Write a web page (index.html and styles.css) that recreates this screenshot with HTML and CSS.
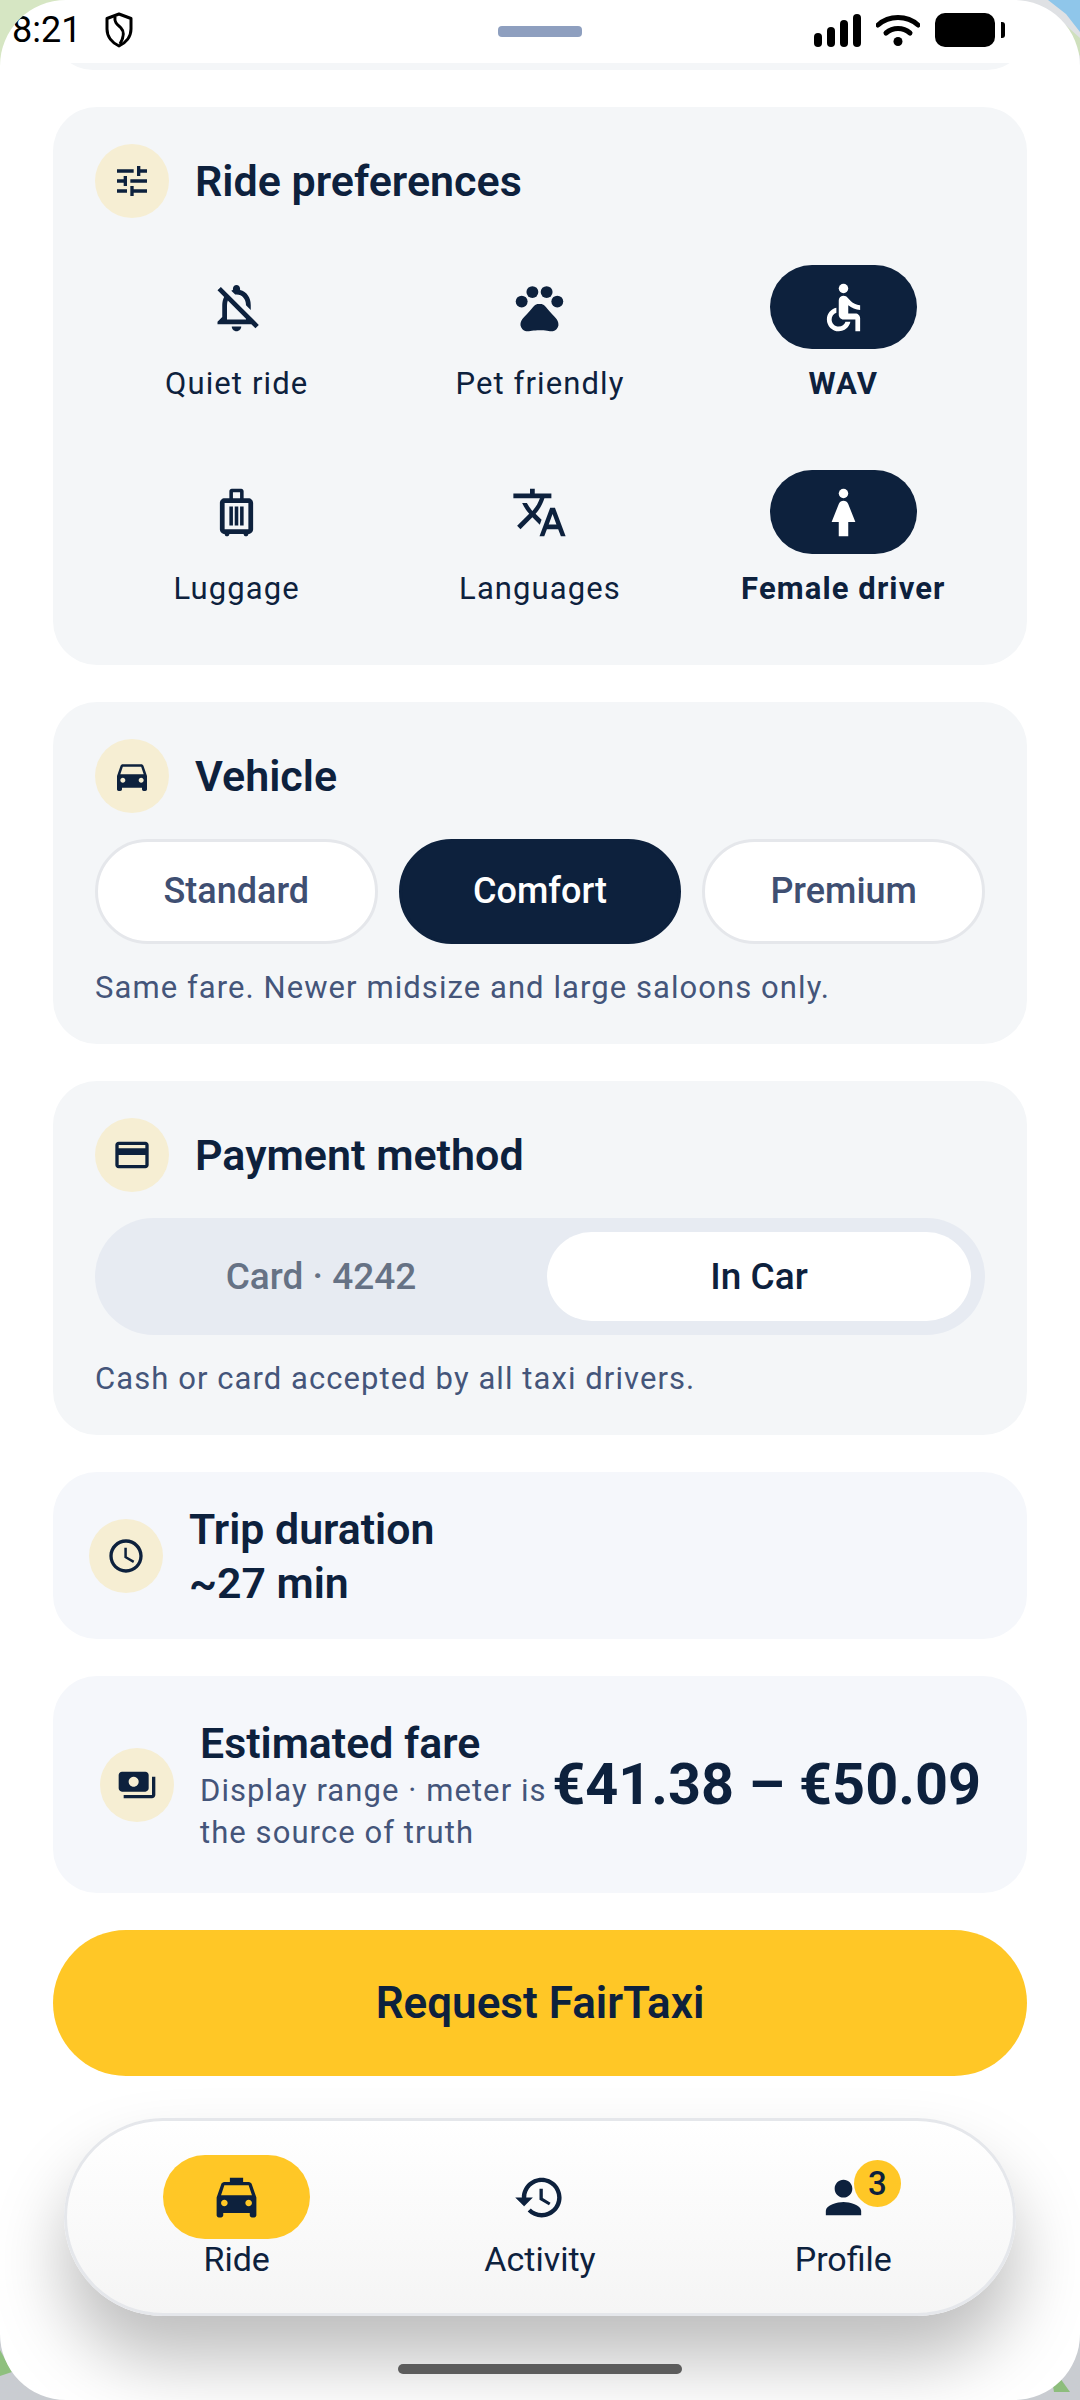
FILE: index.html
```html
<!DOCTYPE html>
<html lang="en">
<head>
  <meta charset="UTF-8" />
  <title>FairTaxi</title>
  <link rel="stylesheet" href="styles.css">
</head>
<body>
  <svg class="map" viewBox="0 0 1080 2400" preserveAspectRatio="none">
    <rect width="1080" height="2400" fill="#c9ccd1"/>
    <polygon points="0,0 170,0 0,200" fill="#d6e6c3"/>
    <polygon points="1000,0 1080,0 1080,90 1040,40" fill="#dfe1e4"/>
    <polygon points="1048,0 1080,0 1080,32 1066,14" fill="#8fc6ea"/>
    <polygon points="1060,20 1080,38 1080,56" fill="#cfe0bd"/>
    <polygon points="0,2350 12,2372 0,2376" fill="#8fc07e"/>
    <polygon points="1054,2392 1070,2392 1060,2378 1052,2380" fill="#8dbd7c"/>
  </svg>

  <div class="sheet">
    <div class="statusbar">
      <div class="status-left">
        <span class="clock">8:21</span>
        <svg class="shield" viewBox="0 0 30 36">
          <path d="M15 2 L27 6.5 V17 C27 25 21.5 31 15 34 C8.5 31 3 25 3 17 V6.5 Z" fill="none" stroke="#000" stroke-width="3" stroke-linejoin="round"/>
          <path d="M11 4.5 C10 11 14 13 17 16 C20 19 20 25 16 32" fill="none" stroke="#000" stroke-width="3"/>
        </svg>
      </div>
      <div class="handle"></div>
      <div class="status-right">
        <div class="signal">
          <span class="bar bar-1"></span>
          <span class="bar bar-2"></span>
          <span class="bar bar-3"></span>
          <span class="bar bar-4"></span>
        </div>
        <svg class="wifi" viewBox="0 0 44 32">
          <path d="M2 11 C13 1 31 1 42 11" fill="none" stroke="#000" stroke-width="5" stroke-linecap="round"/>
          <path d="M10 19 C17 13 27 13 34 19" fill="none" stroke="#000" stroke-width="5" stroke-linecap="round"/>
          <circle cx="22" cy="27.5" r="4.5"/>
        </svg>
        <div class="battery"></div>
        <div class="battery-nub"></div>
      </div>
    </div>

    <div class="content">
      <div class="prev-clip"><div class="prev-card"></div></div>

      <section class="card">
        <div class="card-head">
          <span class="icon-dot">
            <svg viewBox="0 0 24 24"><path d="M3 17v2h6v-2H3zM3 5v2h10V5H3zm10 16v-2h8v-2h-8v-2h-2v6h2zM7 9v2H3v2h4v2h2V9H7zm14 4v-2H11v2h10zm-6-4h2V7h4V5h-4V3h-2v6z"/></svg>
          </span>
          <h2>Ride preferences</h2>
        </div>
        <div class="pref-grid">
          <div class="pref">
            <span class="pref-icon">
              <svg viewBox="0 0 24 24"><path d="M12 22c1.1 0 2-.9 2-2h-4c0 1.1.9 2 2 2zm0-15.5c2.49 0 4 2.02 4 4.5v.1l2 2V11c0-3.07-1.63-5.64-4.5-6.32V4c0-.83-.67-1.5-1.5-1.5s-1.5.67-1.5 1.5v.68c-.24.06-.47.15-.69.23l1.64 1.64c.18-.02.36-.05.55-.05zM5.41 3.35L4 4.76l2.81 2.81C6.29 8.57 6 9.74 6 11v5l-2 2v1h14.24l1.74 1.74 1.41-1.41L5.41 3.35zM16 17H8v-6c0-.68.12-1.32.34-1.9L16 16.76V17z"/></svg>
            </span>
            <span class="pref-label">Quiet ride</span>
          </div>
          <div class="pref">
            <span class="pref-icon">
              <svg viewBox="0 0 24 24"><circle cx="4.5" cy="9.5" r="2.5"/><circle cx="9" cy="5.5" r="2.5"/><circle cx="15" cy="5.5" r="2.5"/><circle cx="19.5" cy="9.5" r="2.5"/><path d="M17.34 14.86c-.87-1.02-1.6-1.89-2.48-2.91-.46-.54-1.05-1.08-1.75-1.32-.11-.04-.22-.07-.33-.09-.25-.04-.52-.04-.78-.04s-.53 0-.79.05c-.11.02-.22.05-.33.09-.7.24-1.28.78-1.75 1.32-.87 1.02-1.6 1.89-2.48 2.91-1.31 1.31-2.92 2.76-2.62 4.79.29 1.02 1.02 2.03 2.33 2.32.73.15 3.06-.44 5.54-.44h.18c2.48 0 4.81.58 5.54.44 1.31-.29 2.04-1.31 2.33-2.32.31-2.04-1.3-3.49-2.61-4.8z"/></svg>
            </span>
            <span class="pref-label">Pet friendly</span>
          </div>
          <div class="pref active">
            <span class="pref-icon">
              <svg viewBox="0 0 24 24"><circle cx="12" cy="4" r="2"/><path d="M19 13v-2c-1.54.02-3.09-.75-4.07-1.83l-1.29-1.43c-.17-.19-.38-.34-.61-.45-.01 0-.01-.01-.02-.01H13c-.35-.2-.75-.3-1.19-.26C10.76 7.11 10 8.04 10 9.09V15c0 1.1.9 2 2 2h5v5h2v-5.5c0-1.1-.9-2-2-2h-3v-3.45c1.29 1.07 3.25 1.94 5 1.95zm-6.17 5c-.41 1.16-1.52 2-2.83 2-1.66 0-3-1.34-3-3 0-1.31.84-2.41 2-2.83V12.1c-2.28.46-4 2.48-4 4.9 0 2.76 2.24 5 5 5 2.42 0 4.44-1.72 4.9-4h-2.07z"/></svg>
            </span>
            <span class="pref-label">WAV</span>
          </div>
          <div class="pref">
            <span class="pref-icon">
              <svg viewBox="0 0 24 24"><path d="M17 6h-2V3c0-.55-.45-1-1-1h-4c-.55 0-1 .45-1 1v3H7c-1.1 0-2 .9-2 2v11c0 1.1.9 2 2 2 0 .55.45 1 1 1s1-.45 1-1h6c0 .55.45 1 1 1s1-.45 1-1c1.1 0 2-.9 2-2V8c0-1.1-.9-2-2-2zM10.5 3.5h3V6h-3V3.5zM17 19H7V8h10v11zM9 9.5h1.5v8H9zm4.5 0H15v8h-1.5zm-2.25 0h1.5v8h-1.5z"/></svg>
            </span>
            <span class="pref-label">Luggage</span>
          </div>
          <div class="pref">
            <span class="pref-icon">
              <svg viewBox="0 0 24 24"><path d="M12.87 15.07l-2.54-2.51.03-.03c1.74-1.94 2.98-4.17 3.71-6.53H17V4h-7V2H8v2H1v1.99h11.17C11.5 7.92 10.44 9.75 9 11.35 8.07 10.32 7.3 9.19 6.69 8h-2c.73 1.63 1.73 3.17 2.98 4.56l-5.09 5.02L4 19l5-5 3.11 3.11.76-2.04zM18.5 10h-2L12 22h2l1.12-3h4.75L21 22h2l-4.5-12zm-2.62 7l1.62-4.33L19.12 17h-3.24z"/></svg>
            </span>
            <span class="pref-label">Languages</span>
          </div>
          <div class="pref active">
            <span class="pref-icon">
              <svg viewBox="0 0 24 24"><circle cx="12" cy="4" r="2"/><path d="M13.94 8.31C13.62 7.52 12.85 7 12 7s-1.62.52-1.94 1.31L7 16h3v6h4v-6h3l-3.06-7.69z"/></svg>
            </span>
            <span class="pref-label">Female driver</span>
          </div>
        </div>
      </section>

      <section class="card">
        <div class="card-head">
          <span class="icon-dot">
            <svg viewBox="0 0 24 24"><path d="M18.92 6.01C18.72 5.42 18.16 5 17.5 5h-11c-.66 0-1.21.42-1.42 1.01L3 12v8c0 .55.45 1 1 1h1c.55 0 1-.45 1-1v-1h12v1c0 .55.45 1 1 1h1c.55 0 1-.45 1-1v-8l-2.08-5.99zM6.5 16c-.83 0-1.5-.67-1.5-1.5S5.67 13 6.5 13s1.5.67 1.5 1.5S7.33 16 6.5 16zm11 0c-.83 0-1.5-.67-1.5-1.5s.67-1.5 1.5-1.5 1.5.67 1.5 1.5-.67 1.5-1.5 1.5zM5 11l1.5-4.5h11L19 11H5z"/></svg>
          </span>
          <h2>Vehicle</h2>
        </div>
        <div class="vehicle-row">
          <div class="vehicle">Standard</div>
          <div class="vehicle selected">Comfort</div>
          <div class="vehicle">Premium</div>
        </div>
        <p class="note">Same fare. Newer midsize and large saloons only.</p>
      </section>

      <section class="card">
        <div class="card-head">
          <span class="icon-dot">
            <svg viewBox="0 0 24 24"><path d="M20 4H4c-1.11 0-1.99.89-1.99 2L2 18c0 1.11.89 2 2 2h16c1.11 0 2-.89 2-2V6c0-1.11-.89-2-2-2zm0 14H4v-6h16v6zm0-10H4V6h16v2z"/></svg>
          </span>
          <h2>Payment method</h2>
        </div>
        <div class="segment">
          <div class="segment-opt">Card · 4242</div>
          <div class="segment-opt on">In Car</div>
        </div>
        <p class="note">Cash or card accepted by all taxi drivers.</p>
      </section>

      <section class="info trip">
        <span class="icon-dot">
          <svg viewBox="0 0 24 24"><path d="M11.99 2C6.47 2 2 6.48 2 12s4.47 10 9.99 10C17.52 22 22 17.52 22 12S17.52 2 11.99 2zM12 20c-4.42 0-8-3.58-8-8s3.58-8 8-8 8 3.58 8 8-3.58 8-8 8zm.5-13H11v6l5.25 3.15.75-1.23-4.5-2.67z"/></svg>
        </span>
        <div class="info-text">
          <div class="info-title">Trip duration</div>
          <div class="info-title">~27 min</div>
        </div>
      </section>

      <section class="info fare">
        <span class="icon-dot">
          <svg viewBox="0 0 24 24"><path d="M19 14V6c0-1.1-.9-2-2-2H3c-1.1 0-2 .9-2 2v8c0 1.1.9 2 2 2h14c1.1 0 2-.9 2-2zm-9-1c-1.66 0-3-1.34-3-3s1.34-3 3-3 3 1.34 3 3-1.34 3-3 3zm13-6v11c0 1.1-.9 2-2 2H4v-2h17V7h2z"/></svg>
        </span>
        <div class="info-text">
          <div class="info-title">Estimated fare</div>
          <div class="info-sub">Display range · meter is the source of truth</div>
        </div>
        <div class="price">€41.38 – €50.09</div>
      </section>

      <button class="request-btn">Request FairTaxi</button>
    </div>

    <nav class="tabbar">
      <div class="tab active">
        <span class="tab-icon">
          <svg viewBox="0 0 24 24"><path d="M18.92 6.01C18.72 5.42 18.16 5 17.5 5H15V3H9v2H6.5c-.66 0-1.21.42-1.42 1.01L3 12v8c0 .55.45 1 1 1h1c.55 0 1-.45 1-1v-1h12v1c0 .55.45 1 1 1h1c.55 0 1-.45 1-1v-8l-2.08-5.99zM6.5 16c-.83 0-1.5-.67-1.5-1.5S5.67 13 6.5 13s1.5.67 1.5 1.5S7.33 16 6.5 16zm11 0c-.83 0-1.5-.67-1.5-1.5s.67-1.5 1.5-1.5 1.5.67 1.5 1.5-.67 1.5-1.5 1.5zM5 11l1.5-4.5h11L19 11H5z"/></svg>
        </span>
        <span class="tab-label">Ride</span>
      </div>
      <div class="tab">
        <span class="tab-icon">
          <svg viewBox="0 0 24 24"><path d="M13 3c-4.97 0-9 4.03-9 9H1l3.89 3.89.07.14L9 12H6c0-3.87 3.13-7 7-7s7 3.13 7 7-3.13 7-7 7c-1.93 0-3.68-.79-4.94-2.06l-1.42 1.42C8.27 19.99 10.51 21 13 21c4.97 0 9-4.03 9-9s-4.03-9-9-9zm-1 5v5l4.28 2.54.72-1.21-3.5-2.08V8H12z"/></svg>
        </span>
        <span class="tab-label">Activity</span>
      </div>
      <div class="tab">
        <span class="tab-icon">
          <svg viewBox="0 0 24 24"><path d="M12 12c2.21 0 4-1.79 4-4s-1.79-4-4-4-4 1.79-4 4 1.79 4 4 4zm0 2c-2.67 0-8 1.34-8 4v2h16v-2c0-2.66-5.33-4-8-4z"/></svg>
          <span class="badge">3</span>
        </span>
        <span class="tab-label">Profile</span>
      </div>
    </nav>

    <div class="home-bar"></div>
  </div>
</body>
</html>
```

FILE: styles.css
```css
* {
  box-sizing: border-box;
}

html, body {
  margin: 0;
  padding: 0;
}

body {
  position: relative;
  width: 1080px;
  height: 2400px;
  overflow: hidden;
  font-family: Roboto, 'Noto Sans', sans-serif;
  color: #0d213d;
}

svg {
  display: block;
  fill: currentColor;
}

.map {
  position: absolute;
  top: 0;
  left: 0;
  width: 1080px;
  height: 2400px;
}

.sheet {
  position: relative;
  height: 2400px;
  background-color: #ffffff;
  border-radius: 66px;
  overflow: hidden;
}

/* status bar */
.statusbar {
  display: flex;
  align-items: center;
  justify-content: space-between;
  height: 63px;
  padding: 0 75px 3px 12px;
  color: #000000;
  position: relative;
}

.status-left {
  display: flex;
  align-items: center;
  gap: 23px;
}

.clock {
  font-size: 36px;
  font-weight: 400;
  line-height: 40px;
}

.shield {
  width: 30px;
  height: 36px;
}

.handle {
  position: absolute;
  left: 498px;
  top: 26px;
  width: 84px;
  height: 11px;
  border-radius: 4px;
  background-color: #8e9fbf;
}

.status-right {
  display: flex;
  align-items: center;
}

.signal {
  display: flex;
  align-items: flex-end;
  gap: 5px;
  height: 33px;
  margin-right: 15px;
}

.bar {
  width: 8px;
  border-radius: 4px;
  background-color: #000000;
}

.bar-1 { height: 14px; }
.bar-2 { height: 20px; }
.bar-3 { height: 27px; }
.bar-4 { height: 33px; }

.wifi {
  width: 44px;
  height: 32px;
  margin-right: 15px;
}

.battery {
  width: 60px;
  height: 34px;
  border-radius: 10px;
  background-color: #000000;
}

.battery-nub {
  width: 4px;
  height: 16px;
  margin-left: 6px;
  border-radius: 0 3px 3px 0;
  background-color: #000000;
}

/* scrolling part */
.content {
  display: flex;
  flex-direction: column;
  gap: 37px;
  padding: 0 53px;
}

.prev-clip {
  display: flex;
  align-items: flex-end;
  height: 7px;
  overflow: hidden;
}

.prev-card {
  flex: 1;
  height: 80px;
  flex-shrink: 0;
  border-radius: 44px;
  background-color: #f4f6f8;
}

.card {
  padding: 37px 42px 36px;
  border-radius: 44px;
  background-color: #f4f6f8;
}

.card-head {
  display: flex;
  align-items: center;
  gap: 26px;
}

h2 {
  margin: 0;
  font-size: 43px;
  font-weight: 600;
}

.icon-dot {
  display: flex;
  align-items: center;
  justify-content: center;
  flex-shrink: 0;
  width: 74px;
  height: 74px;
  border-radius: 50%;
  background-color: #f6eed3;
}

.icon-dot svg {
  width: 40px;
  height: 40px;
}

/* ride preferences */
.pref-grid {
  display: grid;
  grid-template-columns: repeat(3, 1fr);
  column-gap: 20px;
  row-gap: 66px;
  margin-top: 26px;
  padding: 21px 0 20px;
}

.pref {
  display: flex;
  flex-direction: column;
  align-items: center;
  gap: 15px;
}

.pref-icon {
  display: flex;
  align-items: center;
  justify-content: center;
  width: 147px;
  height: 84px;
  border-radius: 42px;
}

.pref-icon svg {
  width: 57px;
  height: 57px;
}

.tab-icon svg {
  width: 53px;
  height: 53px;
}

.pref-label {
  font-size: 31px;
  line-height: 40px;
  letter-spacing: 1.1px;
}

.pref.active .pref-icon {
  background-color: #0d213d;
  color: #ffffff;
}

.pref.active .pref-label {
  font-weight: 700;
}

/* vehicle */
.vehicle-row {
  display: flex;
  gap: 21px;
  margin-top: 26px;
}

.vehicle {
  flex: 1;
  height: 105px;
  border: 3px solid #e5e7eb;
  border-radius: 53px;
  background-color: #ffffff;
  color: #3f4f72;
  font-size: 36px;
  font-weight: 500;
  line-height: 99px;
  text-align: center;
}

.vehicle.selected {
  border-color: #0d213d;
  background-color: #0d213d;
  color: #ffffff;
}

.note {
  margin: 24px 0 0;
  color: #44557a;
  font-size: 31px;
  line-height: 40px;
  letter-spacing: 1.07px;
}

/* payment toggle */
.segment {
  display: flex;
  gap: 14px;
  height: 117px;
  margin-top: 26px;
  padding: 14px;
  border-radius: 59px;
  background-color: #e7ebf2;
}

.segment-opt {
  flex: 1;
  border-radius: 45px;
  color: #667285;
  font-size: 37px;
  font-weight: 500;
  line-height: 89px;
  text-align: center;
}

.segment-opt.on {
  background-color: #ffffff;
  color: #0d213d;
}

/* trip and fare */
.info {
  display: flex;
  align-items: center;
  gap: 26px;
  border-radius: 44px;
  background-color: #f5f7fb;
}

.trip {
  height: 167px;
  padding: 0 36px;
}

.fare {
  height: 217px;
  padding: 0 46px 0 47px;
}

.info-text {
  flex: 1;
  min-width: 0;
}

.info-title {
  font-size: 42.8px;
  font-weight: 600;
  line-height: 54px;
}

.info-sub {
  color: #44557a;
  font-size: 31px;
  line-height: 42px;
  letter-spacing: 1.07px;
}

.price {
  flex-shrink: 0;
  margin-left: -25px;
  font-size: 57.6px;
  font-weight: 700;
  white-space: nowrap;
}

.request-btn {
  height: 146px;
  border: none;
  border-radius: 73px;
  background-color: #ffc726;
  color: #0d213d;
  font-family: inherit;
  font-size: 44px;
  font-weight: 600;
}

/* floating tabs */
.tabbar {
  position: absolute;
  left: 64px;
  top: 2118px;
  display: flex;
  width: 952px;
  height: 198px;
  padding: 34px 18px 0;
  border: 3px solid #e5e7eb;
  border-radius: 99px;
  background: linear-gradient(#ffffff, #f5f5f5);
  box-shadow: 0 44px 70px rgba(0, 0, 0, 0.26);
}

.tab {
  flex: 1;
  display: flex;
  flex-direction: column;
  align-items: center;
}

.tab-icon {
  position: relative;
  display: flex;
  align-items: center;
  justify-content: center;
  width: 147px;
  height: 84px;
  border-radius: 42px;
}

.tab.active .tab-icon {
  background-color: #ffc726;
}

.tab-label {
  font-size: 34px;
  line-height: 40px;
}

.badge {
  position: absolute;
  top: 5px;
  left: 84px;
  width: 47px;
  height: 47px;
  border-radius: 50%;
  background-color: #ffc726;
  font-size: 33px;
  font-weight: 500;
  line-height: 47px;
  text-align: center;
}

.home-bar {
  position: absolute;
  left: 398px;
  top: 2364px;
  width: 284px;
  height: 10px;
  border-radius: 5px;
  background-color: #5c5c5c;
}
```
